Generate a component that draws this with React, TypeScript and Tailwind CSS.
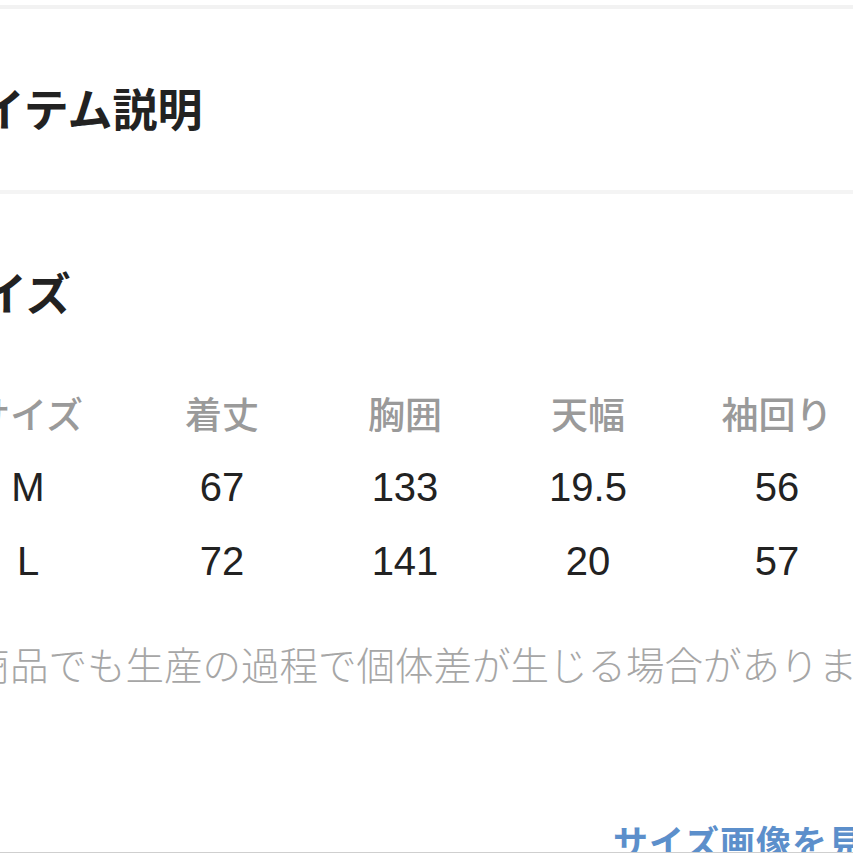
import React from "react";

const jp = "font-['Noto_Sans_CJK_JP',sans-serif]";
const num = "font-['Liberation_Sans','Noto_Sans_CJK_JP',sans-serif]";

const headers = ["サイズ", "着丈", "胸囲", "天幅", "袖回り"];
const rows = [
  ["M", "67", "133", "19.5", "56"],
  ["L", "72", "141", "20", "57"],
];

const App = () => {
  return (
    <main className={`relative w-[853px] h-[853px] overflow-hidden bg-white ${jp}`}>
      {/* previous section edge */}
      <div className="h-[5px]" />
      <div className="h-[4px] bg-[#f2f2f2]" />

      <div className="ml-[-63px] w-[933px]">
        {/* Item description */}
        <div className="pt-[76px] pb-[60px]">
          <h2 className="text-[45px] leading-none font-bold text-[#222] whitespace-nowrap">
            アイテム説明
          </h2>
        </div>
      </div>

      <div className="h-[4px] bg-[#f4f4f4]" />

      <div className="ml-[-63px] w-[933px]">
        {/* Size */}
        <h2 className="mt-[75px] text-[45px] leading-none font-bold text-[#222] whitespace-nowrap">
          サイズ
        </h2>

        <div className="mt-[62px]">
          <div className="grid grid-cols-[182px_206px_160px_206px_172px] h-[74px] items-center">
            {headers.map((h) => (
              <div
                key={h}
                className="text-center text-[37px] leading-none font-medium text-[#9a9a9a] whitespace-nowrap"
              >
                {h}
              </div>
            ))}
          </div>
          {rows.map((r) => (
            <div
              key={r[0]}
              className="grid grid-cols-[182px_206px_160px_206px_172px] h-[74px] items-center"
            >
              {r.map((v, i) => (
                <div
                  key={i}
                  className={`text-center text-[40px] leading-none text-[#222] ${num}`}
                >
                  {v}
                </div>
              ))}
            </div>
          ))}
        </div>

        <p className="mt-[46px] ml-[-4px] text-[38.5px] leading-none font-light text-[#a6a6a6] whitespace-nowrap">
          ※商品でも生産の過程で個体差が生じる場合があります。
        </p>

        <div className="mt-[140px] pl-[676px] whitespace-nowrap">
          <span className="text-[35px] leading-none font-bold text-[#5c8fcb] tracking-[1px]">
            サイズ画像を見る
          </span>
        </div>
      </div>

      {/* bottom bar edge */}
      <div className="absolute left-0 right-0 bottom-0 h-px bg-[#cfcfcf]" />
    </main>
  );
};

export default App;
